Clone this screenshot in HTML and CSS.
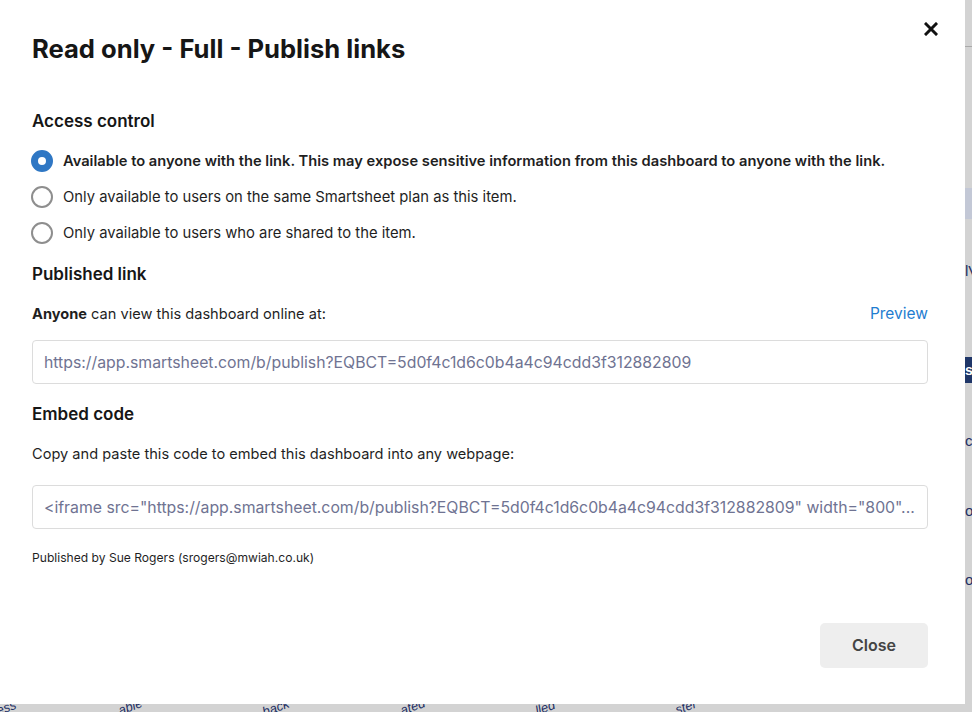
FILE: index.html
```html
<!DOCTYPE html>
<html>
<head>
<meta charset="utf-8">
<link rel="stylesheet" href="styles.css">
</head>
<body>
<div class="page">
  <div class="strip-line"></div>
  <div class="strip-blue"></div>
  <div class="strip-text t1">lV</div>
  <div class="strip-navy">s</div>
  <div class="strip-text t2">c</div>
  <div class="strip-text t3">of</div>
  <div class="strip-text t4">of</div>
  <div class="rot r1">ess</div>
  <div class="rot r2">able</div>
  <div class="rot r3">back</div>
  <div class="rot r4">ated</div>
  <div class="rot r5">lled</div>
  <div class="rot r6">ster</div>
</div>
<div class="modal">
  <button class="close-x" aria-label="Close">
    <svg width="14" height="14" viewBox="0 0 14 14"><path d="M2 2 L12 12 M12 2 L2 12" stroke="#111" stroke-width="3" stroke-linecap="square"/></svg>
  </button>
  <h1 class="title">Read only - Full - Publish links</h1>

  <h2 class="section-title access">Access control</h2>
  <div class="radios">
    <label class="radio-row selected"><span class="radio"></span><span class="radio-label">Available to anyone with the link. This may expose sensitive information from this dashboard to anyone with the link.</span></label>
    <label class="radio-row"><span class="radio"></span><span class="radio-label">Only available to users on the same Smartsheet plan as this item.</span></label>
    <label class="radio-row"><span class="radio"></span><span class="radio-label">Only available to users who are shared to the item.</span></label>
  </div>

  <h2 class="section-title published">Published link</h2>
  <div class="link-row"><span><b>Anyone</b> can view this dashboard online at:</span><a class="preview">Preview</a></div>
  <div class="field field-link">https://app.smartsheet.com/b/publish?EQBCT=5d0f4c1d6c0b4a4c94cdd3f312882809</div>

  <h2 class="section-title embed">Embed code</h2>
  <div class="desc">Copy and paste this code to embed this dashboard into any webpage:</div>
  <div class="field field-embed">&lt;iframe src="https://app.smartsheet.com/b/publish?EQBCT=5d0f4c1d6c0b4a4c94cdd3f312882809" width="800"...</div>

  <div class="published-by">Published by Sue Rogers (srogers@mwiah.co.uk)</div>

  <div class="footer"><button class="btn-close">Close</button></div>
</div>
</body>
</html>
```

FILE: styles.css
```css
* { box-sizing: border-box; }
html, body { margin: 0; padding: 0; }
body {
  width: 972px;
  height: 712px;
  overflow: hidden;
  background: #d3d3d3;
  font-family: Inter, "Noto Sans", sans-serif;
  position: relative;
}
.page { position: absolute; inset: 0; }
.strip-line { position: absolute; left: 965px; top: 46px; width: 7px; height: 1px; background: #a9a9a9; }
.strip-blue { position: absolute; left: 965px; top: 188px; width: 7px; height: 31px; background: #c3c8d6; }
.strip-navy { position: absolute; left: 965px; top: 357px; width: 7px; height: 26px; background: #1f3668; color: #fff; font: bold 14px "Liberation Sans", sans-serif; line-height: 26px; overflow: hidden; }
.strip-text { position: absolute; left: 965px; width: 7px; overflow: hidden; color: #1d2f63; font: 15px "Liberation Sans", sans-serif; line-height: 18px; white-space: nowrap; }
.t1 { top: 262px; }
.t2 { top: 432px; }
.t3 { top: 502px; }
.t4 { top: 571px; }
.rot { position: absolute; color: #1d2f63; font: italic 13px "Liberation Sans", sans-serif; transform: rotate(-20deg); }
.r1 { left: -4px; top: 700px; }
.r2 { left: 118px; top: 699px; }
.r3 { left: 262px; top: 700px; }
.r4 { left: 400px; top: 699px; }
.r5 { left: 535px; top: 700px; }
.r6 { left: 675px; top: 699px; }

.modal {
  position: absolute;
  left: 0; top: 0;
  width: 965px;
  height: 704px;
  background: #fff;
  padding: 33px 37px 0 32px;
  color: #161616;
}
.close-x {
  position: absolute;
  left: 924px; top: 22px;
  width: 14px; height: 14px;
  padding: 0; border: 0; background: none;
  display: flex;
}
.title {
  margin: 0;
  font-family: Inter, sans-serif;
  font-weight: 700;
  font-size: 25.6px;
  line-height: 32px;
  color: #161616;
}
.section-title {
  margin: 0;
  font-size: 17px;
  font-weight: 600;
  line-height: 24px;
  color: #161616;
}
.access { margin-top: 44px; }
.radios { margin-top: 10px; display: flex; flex-direction: column; }
.radio-row { display: flex; align-items: center; height: 36px; font-size: 14.8px; color: #1f1f1f; }
.radio {
  width: 22px; height: 22px;
  border-radius: 50%;
  border: 2px solid #8e8e8e;
  margin-left: -1px;
  margin-right: 10px;
  flex: none;
}
.selected .radio { border: 7px solid #2f77c4; }
.selected .radio-label { font-weight: 600; font-size: 14.7px; }
.published { margin-top: 11px; }
.link-row {
  margin-top: 16px;
  display: flex; justify-content: space-between; align-items: center;
  font-size: 14.6px; line-height: 24px; color: #1f1f1f;
}
.link-row b { font-weight: 700; }
.preview { color: #1f7dd0; font-size: 15.5px; cursor: pointer; }
.field {
  height: 44px;
  border: 1.5px solid #dcdcdc;
  border-radius: 4px;
  padding: 0 11px;
  display: flex; align-items: center;
  color: #6f7392;
  font-size: 15.8px;
  white-space: nowrap;
  overflow: hidden;
}
.field-link { margin-top: 14px; }
.embed { margin-top: 18px; }
.desc { margin-top: 16px; font-size: 14.6px; line-height: 24px; color: #1f1f1f; }
.field-embed { margin-top: 19px; }
.published-by { margin-top: 21px; font-size: 12.1px; line-height: 16px; color: #1f1f1f; }
.footer { margin-top: 57px; display: flex; justify-content: flex-end; }
.btn-close {
  width: 108px; height: 45px;
  border: 0; border-radius: 5px;
  background: #eeeeee;
  color: #444;
  font-family: Inter, sans-serif;
  font-size: 16px; font-weight: 600;
  padding-top: 0;
}
```
